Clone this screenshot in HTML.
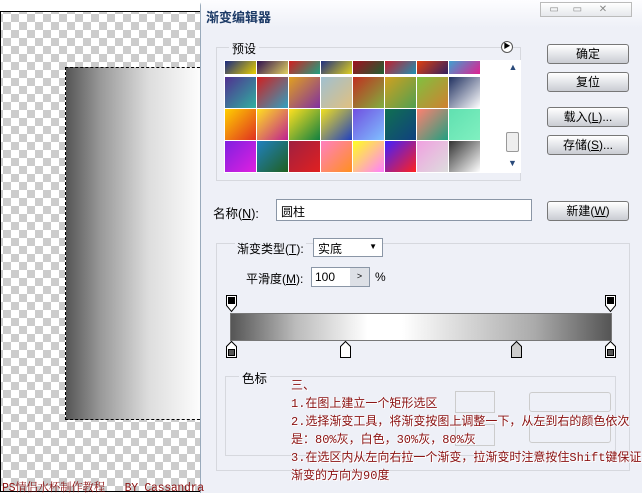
<!DOCTYPE html>
<html><head><meta charset="utf-8"><style>
*{margin:0;padding:0;box-sizing:border-box}
body{width:642px;height:493px;overflow:hidden;background:#fff;position:relative;font-family:"Liberation Sans","Noto Sans CJK SC",sans-serif;font-size:12px;color:#000}
.a{position:absolute}
.chk{left:0;top:11px;width:200px;height:481px;border-top:1px solid #000;border-left:1px solid #000;border-bottom:1px solid #000;
background-color:#fff;background-image:linear-gradient(45deg,#ccc 25%,transparent 25%,transparent 75%,#ccc 75%),linear-gradient(45deg,#ccc 25%,transparent 25%,transparent 75%,#ccc 75%);background-size:16px 16px;background-position:2px 2px,10px 10px}
.sel{left:65px;top:67px;width:140px;height:353px;border:1px dashed #000;background:linear-gradient(90deg,#555 0%,#999 25%,#ddd 60%,#fff 100%)}
.dlg{left:200px;top:0;width:442px;height:493px;background:#eef0f7;border-left:1px solid #9ab;border-top-left-radius:6px}
.tb{left:0;top:0;width:442px;height:28px;background:linear-gradient(#fdfdff,#eef0f7)}
.btn{position:absolute;width:82px;height:20px;border:1px solid #777;border-radius:3px;background:linear-gradient(#fff,#e4e6ea 50%,#c9ccd2);text-align:center;line-height:18px;font-size:12px}
.grp{position:absolute;border:1px solid #d6d8de;}
.in{position:absolute;background:#fff;border:1px solid #8a96a6}
.red{position:absolute;left:291px;color:#8a1010;font-size:12px;white-space:nowrap;text-shadow:1px 1px 0 #fff,-1px 0 0 #fff;font-family:"Liberation Mono","Noto Sans CJK SC",monospace}
.sw{position:absolute;width:31px;height:31px}
</style></head><body>
<div class="a chk"></div>
<div class="a sel"></div>
<div id="g"></div>
<div class="a dlg">
 <div class="a tb"></div>
 <div class="a" style="left:5px;top:7px;font-weight:bold;color:#1c3a66;font-size:13px">渐变编辑器</div>
 <div class="a" style="left:339px;top:2px;width:92px;height:15px;border:1px solid #bbb;background:linear-gradient(#fff,#e6e8ec);color:#888;font-size:10px;line-height:13px">&nbsp;&nbsp;&nbsp;▭ &nbsp;&nbsp;&nbsp;&nbsp;▭ &nbsp;&nbsp;&nbsp;&nbsp;&nbsp;✕</div>
 <div class="grp" style="left:15px;top:47px;width:305px;height:134px"></div>
 <div class="a" style="left:28px;top:40px;background:#eef0f7;padding:0 3px">预设</div>
 <div class="a" style="left:300px;top:41px;width:12px;height:12px;border-radius:50%;border:1px solid #555;background:#fff;font-size:7px;line-height:10px;text-align:center">▶</div>
 <div class="a" style="left:23px;top:60px;width:297px;height:113px;background:#fff;z-index:0"></div>
 <div class="a" style="left:304px;top:60px;width:16px;height:113px;background:#fff;color:#2a4a7a;font-size:9px;text-align:center"><div style="margin-top:2px">▲</div><div style="position:absolute;left:1px;top:72px;width:13px;height:20px;border:1px solid #999;border-radius:2px;background:#eee"></div><div style="position:absolute;left:3px;top:98px">▼</div></div>
 <div class="btn" style="left:346px;top:44px">确定</div>
 <div class="btn" style="left:346px;top:72px">复位</div>
 <div class="btn" style="left:346px;top:107px">载入(<u>L</u>)...</div>
 <div class="btn" style="left:346px;top:135px">存储(<u>S</u>)...</div>
 <div class="btn" style="left:346px;top:201px">新建(<u>W</u>)</div>
 <div class="a" style="left:12px;top:203px;font-size:12.5px">名称(<u>N</u>):</div>
 <div class="in" style="left:75px;top:199px;width:256px;height:22px;padding:3px 4px">圆柱</div>
 <div class="grp" style="left:15px;top:243px;width:414px;height:228px"></div>
 <div class="a" style="left:34px;top:240px;background:#eef0f7;padding:0 2px">渐变类型(<u>T</u>):</div>
 <div class="in" style="left:112px;top:238px;width:70px;height:19px;padding:1px 4px">实底<span style="position:absolute;right:5px;font-size:8px;top:3px">▼</span></div>
 <div class="a" style="left:45px;top:270px">平滑度(<u>M</u>):</div>
 <div class="in" style="left:110px;top:267px;width:59px;height:20px;padding:2px 3px">100<div style="position:absolute;left:38px;top:0;width:19px;height:18px;background:#dde0e6;font-size:9px;text-align:center;line-height:17px">&gt;</div></div>
 <div class="a" style="left:174px;top:270px">%</div>
 <div class="a" style="left:29px;top:313px;width:382px;height:28px;border:1px solid #777;background:linear-gradient(90deg,#555,#bbb 17%,#fff 36%,#fff 45%,#ccc 66%,#aaa 80%,#555)"></div>
 <svg class="a" style="left:22px;top:292px" width="400" height="70">
  <g stroke="#000" fill="#fff">
   <path d="M3.5 3.5h10v10l-5 6-5-6z"/><rect x="5.5" y="5.5" width="6" height="6" fill="#000"/>
   <path d="M382.5 3.5h10v10l-5 6-5-6z"/><rect x="384.5" y="5.5" width="6" height="6" fill="#000"/>
   <path d="M3.5 65.5h10v-11l-5-5-5 5z"/><rect x="5.5" y="57.5" width="6" height="6" fill="#555"/>
   <path d="M117.5 65.5h10v-11l-5-5-5 5z"/>
   <path d="M288.5 65.5h10v-11l-5-5-5 5z" fill="#ccc"/>
   <path d="M382.5 65.5h10v-11l-5-5-5 5z"/><rect x="384.5" y="57.5" width="6" height="6" fill="#555"/>
  </g>
 </svg>
 <div class="grp" style="left:24px;top:376px;width:391px;height:80px"></div>
 <div class="a" style="left:38px;top:368px;background:#eef0f7;padding:0 3px;font-size:12.5px">色标</div>
 <div class="a" style="left:254px;top:391px;width:40px;height:22px;border:1px solid #ccc"></div>
 <div class="a" style="left:328px;top:392px;width:82px;height:20px;border:1px solid #ccc;border-radius:3px"></div>
 <div class="a" style="left:254px;top:424px;width:40px;height:22px;border:1px solid #ccc"></div>
 <div class="a" style="left:328px;top:423px;width:82px;height:20px;border:1px solid #ccc;border-radius:3px"></div>
</div>
<div class="a" style="left:2px;top:479px;color:#8a1010;font-family:'Liberation Mono','Noto Serif CJK SC',monospace;font-size:11.5px;white-space:nowrap;letter-spacing:-0.3px">PS情侣水杯制作教程 &nbsp; BY Cassandra</div>
<div class="red" style="top:376px">三、</div>
<div class="red" style="top:394px">1.在图上建立一个矩形选区</div>
<div class="red" style="top:412px">2.选择渐变工具，将渐变按图上调整一下，从左到右的颜色依次</div>
<div class="red" style="top:430px">是：80%灰，白色，30%灰，80%灰</div>
<div class="red" style="top:448px">3.在选区内从左向右拉一个渐变，拉渐变时注意按住Shift键保证</div>
<div class="red" style="top:466px">渐变的方向为90度</div>
<script>
var c=[["#1a2a80,#e8d000","#301050,#e0d060","#d02020,#20a080","#203080,#e0d020","#a01020,#206030","#c02030,#2090b0","#e04010,#302060","#40a0d0,#e02090"],
["#503090,#30b0a0","#d02020,#30a0c0","#e0a020,#8030a0","#a0c0d0,#e0c080","#c03020,#80b040","#d0a020,#50a050","#80c040,#d08030","#203060,#fff"],
["#ffd000,#e03020","#ffe020,#c02090","#ffe020,#108040","#f0e020,#2040c0","#7050e0,#80c0ff","#107050,#104080","#ff8070,#20a080","#60e0b0,#80f0c0"],
["#8020e0,#e020e0","#2080c0,#206020","#a02040,#e02020","#ff80c0,#ff9020","#ffff20,#ff80ff","#4020ff,#ff2020","#f0a0e0,#ddd","#333,#fff"]];
var h="",ys=[61,77,109,141],hs=[13,31,31,31];
for(var r=0;r<4;r++)for(var i=0;i<8;i++){var s=c[r][i].split(",");h+='<div class="sw" style="z-index:2;left:'+(225+i*32)+'px;top:'+ys[r]+'px;height:'+hs[r]+'px;background:linear-gradient(135deg,'+s[0]+','+s[1]+')"></div>';}
document.getElementById("g").innerHTML=h;
</script>
</body></html>
